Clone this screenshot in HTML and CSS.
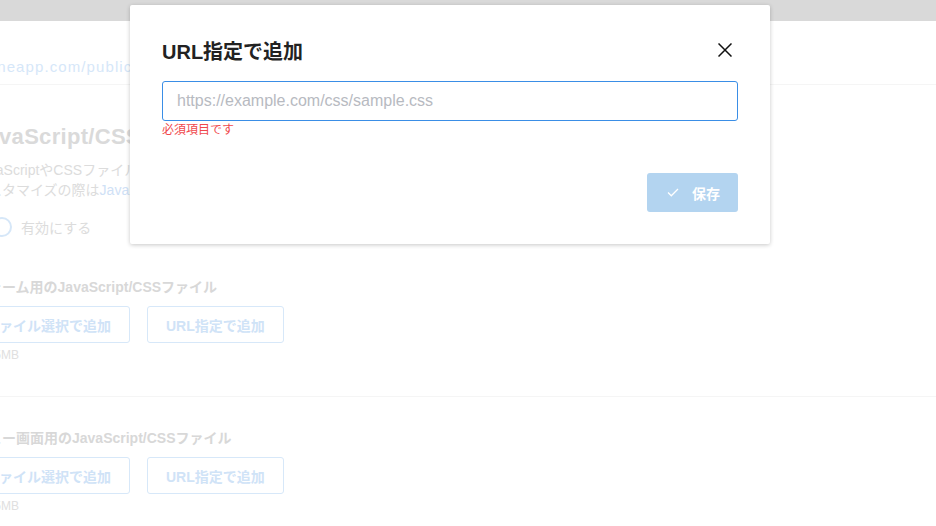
FILE: index.html
```html
<!DOCTYPE html>
<html lang="ja">
<head>
    <meta charset="UTF-8">
    <meta name="viewport" content="width=device-width, initial-scale=1.0">
    <title>JavaScript/CSSでカスタマイズ</title>
    <link rel="stylesheet" href="styles.css">
</head>

<body>
    <div class="topbar"></div>

    <div class="page-header">
        <span class="public-url">kintoneapp.com/public/8f2c41a7d</span>
    </div>

    <div class="page">
        <h2 class="page-title">JavaScript/CSSでカスタマイズ</h2>
        <p class="page-desc">
            JavaScriptやCSSファイルを使って公開画面をカスタマイズできます。<br>
            カスタマイズの際は<span class="link">JavaScript API</span>をご利用ください。
        </p>
        <label class="toggle-row">
            <span class="toggle"></span>
            <span>有効にする</span>
        </label>

        <div class="file-section">
            <div class="section-label">フォーム用のJavaScript/CSSファイル</div>
            <div class="btn-row">
                <button class="btn-outline">ファイル選択で追加</button>
                <button class="btn-outline">URL指定で追加</button>
            </div>
            <div class="note">最大 5MB</div>
        </div>

        <hr class="sep">

        <div class="file-section">
            <div class="section-label">ビュー画面用のJavaScript/CSSファイル</div>
            <div class="btn-row">
                <button class="btn-outline">ファイル選択で追加</button>
                <button class="btn-outline">URL指定で追加</button>
            </div>
            <div class="note">最大 5MB</div>
        </div>
    </div>

    <!-- URL指定ダイアログ -->
    <div class="dialog">
        <div class="dialog-head">
            <div class="dialog-title">URL指定で追加</div>
            <button class="dialog-close" aria-label="閉じる">
                <svg width="14" height="14" viewBox="0 0 14 14">
                    <path d="M0.5 0.5L13.5 13.5M13.5 0.5L0.5 13.5" stroke="#111" stroke-width="1.5" fill="none"/>
                </svg>
            </button>
        </div>
        <input class="url-input" type="text" placeholder="https://example.com/css/sample.css">
        <div class="error-text">必須項目です</div>
        <div class="dialog-foot">
            <button class="btn-save" disabled>
                <svg width="12" height="9" viewBox="0 0 12 9">
                    <path d="M1 4.5L4.3 7.8L11 1" stroke="#fff" stroke-width="1.3" fill="none"/>
                </svg>
                <span>保存</span>
            </button>
        </div>
    </div>
</body>
</html>
```

FILE: styles.css
```css
body {
    margin: 0;
    font-family: "Liberation Sans", "Noto Sans CJK JP", sans-serif;
    background-color: #fff;
    color: #d8d8d8;
    overflow: hidden;
    height: 526px;
}

.topbar {
    height: 21px;
    background-color: #d9d9d9;
}

.page-header {
    height: 64px;
    box-sizing: border-box;
    padding-top: 36px;
    border-bottom: 1px solid #f5f5f5;
    white-space: nowrap;
}

.public-url {
    display: block;
    margin-left: -40px;
    font-size: 15px;
    line-height: 20px;
    letter-spacing: 1.1px;
    color: #d6e7f9;
}

.page {
    margin-left: -26px;
    white-space: nowrap;
}

.page-title {
    margin: 37px 0 0;
    font-size: 22px;
    line-height: 30px;
    font-weight: bold;
    letter-spacing: 0.3px;
    color: #dadada;
}

.page-desc {
    margin: 8px 0 0;
    font-size: 14px;
    line-height: 20px;
    color: #dcdcdc;
}

.link {
    color: #cfe1f6;
}

.toggle-row {
    display: flex;
    align-items: center;
    gap: 9px;
    height: 22px;
    margin-top: 16px;
    font-size: 14px;
    color: #dcdcdc;
}

.toggle {
    width: 16px;
    height: 16px;
    border: 2px solid #d6e7f8;
    border-radius: 50%;
    margin-left: 18px;
}

.file-section {
    padding-top: 39px;
}

.sep + .file-section {
    padding-top: 31px;
}

.section-label {
    font-size: 14px;
    line-height: 20px;
    font-weight: bold;
    color: #d8d8d8;
}

.btn-row {
    display: flex;
    gap: 17px;
    margin: 9px 0 0 -8px;
}

.btn-outline {
    height: 37px;
    padding: 0 18px;
    font-family: inherit;
    font-size: 14px;
    font-weight: bold;
    color: #d0e3f7;
    background-color: #fff;
    border: 1px solid #d7e8f9;
    border-radius: 3px;
}

.note {
    margin: 4px 0 0 -7px;
    font-size: 12px;
    line-height: 16px;
    color: #e0e0e0;
}

.sep {
    border: none;
    height: 1px;
    background-color: #f5f5f5;
    margin: 33px 0 0 26px;
}

.dialog {
    position: absolute;
    left: 130px;
    top: 5px;
    width: 640px;
    box-sizing: border-box;
    padding: 31px 32px 32px;
    background-color: #fff;
    border-radius: 2px;
    box-shadow: 0 1px 4px rgba(0, 0, 0, 0.22);
    color: #222;
}

.dialog-head {
    display: flex;
    align-items: center;
    justify-content: space-between;
    height: 28px;
}

.dialog-title {
    font-size: 20px;
    font-weight: bold;
    color: #222;
}

.dialog-close {
    width: 26px;
    height: 26px;
    padding: 0;
    border: none;
    background: none;
    display: flex;
    align-items: center;
    justify-content: center;
}

.url-input {
    display: block;
    width: 100%;
    height: 40px;
    box-sizing: border-box;
    margin-top: 17px;
    padding: 0 14px;
    font-family: inherit;
    font-size: 16px;
    border: 1px solid #3a8ee6;
    border-radius: 3px;
    outline: none;
}

.url-input::placeholder {
    color: #b7bac1;
}

.error-text {
    margin-top: 2px;
    font-size: 12px;
    line-height: 15px;
    color: #f0484c;
}

.dialog-foot {
    display: flex;
    justify-content: flex-end;
    margin-top: 35px;
}

.btn-save {
    display: flex;
    align-items: center;
    gap: 13px;
    height: 39px;
    padding: 0 18px 0 20px;
    font-family: inherit;
    font-size: 14px;
    font-weight: bold;
    color: #fff;
    background-color: #b3d4f0;
    border: none;
    border-radius: 3px;
}
```
